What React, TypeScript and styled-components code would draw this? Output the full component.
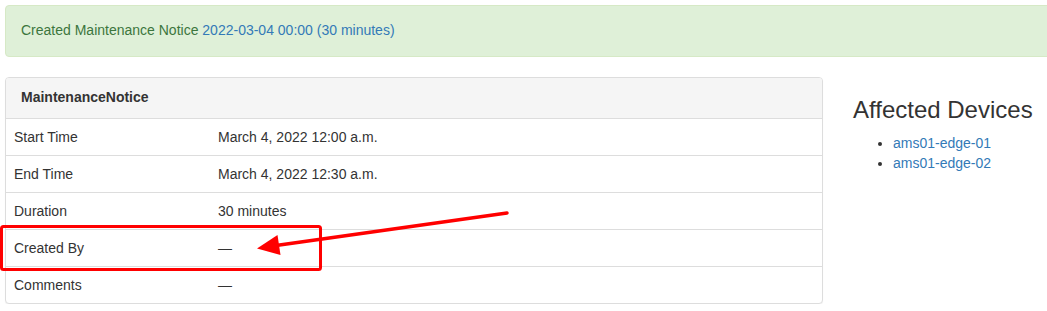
import React from "react";
import styled, { createGlobalStyle } from "styled-components";

const Global = createGlobalStyle`
  html, body { margin: 0; padding: 0; overflow: hidden; background: #fff; }
  body {
    font-family: "Liberation Sans", Arial, Helvetica, sans-serif;
    font-size: 14px;
    line-height: 1.42857;
    color: #333;
  }
  * { box-sizing: border-box; }
`;

const Page = styled.div`
  position: relative;
  width: 1270px;
  padding: 5px 0 0 5px;
`;

const Alert = styled.div`
  padding: 15px;
  margin-bottom: 20px;
  border: 1px solid #d6e9c6;
  border-radius: 4px;
  background: #dff0d8;
  color: #3c763d;
`;

const Link = styled.a`
  color: #337ab7;
  text-decoration: none;
`;

const Row = styled.div`
  display: flex;
  gap: 30px;
  align-items: flex-start;
`;

const MainCol = styled.div`
  width: 818px;
  flex: none;
`;

const SideCol = styled.div`
  flex: 1;
`;

const Panel = styled.div`
  border: 1px solid #ddd;
  border-radius: 4px;
  background: #fff;
  box-shadow: 0 1px 1px rgba(0, 0, 0, 0.05);
  overflow: hidden;
`;

const PanelHeading = styled.div`
  padding: 10px 15px;
  background: #f5f5f5;
  border-bottom: 1px solid #ddd;
  font-weight: bold;
  color: #333;
`;

const Table = styled.table`
  width: 100%;
  border-collapse: collapse;
`;

const Tr = styled.tr<{ $first?: boolean }>`
  border-top: ${(p) => (p.$first ? "none" : "1px solid #ddd")};
`;

const Cell = styled.td<{ $label?: boolean }>`
  padding: 8px;
  line-height: 20px;
  vertical-align: top;
  width: ${(p) => (p.$label ? "25%" : "auto")};
`;

const SideTitle = styled.h3`
  margin: 20px 0 10px;
  font-size: 24px;
  font-weight: 500;
  line-height: 1.1;
  color: #333;
`;

const DeviceList = styled.ul`
  margin: 0 0 10px;
  padding-left: 40px;
  line-height: 20px;
`;

const Overlay = styled.svg`
  position: absolute;
  left: 0;
  top: 0;
  pointer-events: none;
`;

const rows: [string, string][] = [
  ["Start Time", "March 4, 2022 12:00 a.m."],
  ["End Time", "March 4, 2022 12:30 a.m."],
  ["Duration", "30 minutes"],
  ["Created By", "\u2014"],
  ["Comments", "\u2014"],
];

export default function App() {
  return (
    <>
      <Global />
      <Page>
        <Alert>
          Created Maintenance Notice <Link href="#">2022-03-04 00:00 (30 minutes)</Link>
        </Alert>
        <Row>
          <MainCol>
            <Panel>
              <PanelHeading>MaintenanceNotice</PanelHeading>
              <Table>
                <tbody>
                  {rows.map(([k, v], i) => (
                    <Tr key={k} $first={i === 0}>
                      <Cell $label>{k}</Cell>
                      <Cell>{v}</Cell>
                    </Tr>
                  ))}
                </tbody>
              </Table>
            </Panel>
          </MainCol>
          <SideCol>
            <SideTitle>Affected Devices</SideTitle>
            <DeviceList>
              <li><Link href="#">ams01-edge-01</Link></li>
              <li><Link href="#">ams01-edge-02</Link></li>
            </DeviceList>
          </SideCol>
        </Row>
        <Overlay width="1047" height="311" viewBox="0 0 1047 311">
          <rect x="1.5" y="226.5" width="319" height="43" rx="2" fill="none" stroke="#ff0000" strokeWidth="3" />
          <line x1="507" y1="213" x2="276" y2="245.5" stroke="#ff0000" strokeWidth="3.5" strokeLinecap="round" />
          <polygon points="257,248.5 277.5,235 280.5,255" fill="#ff0000" />
        </Overlay>
      </Page>
    </>
  );
}
